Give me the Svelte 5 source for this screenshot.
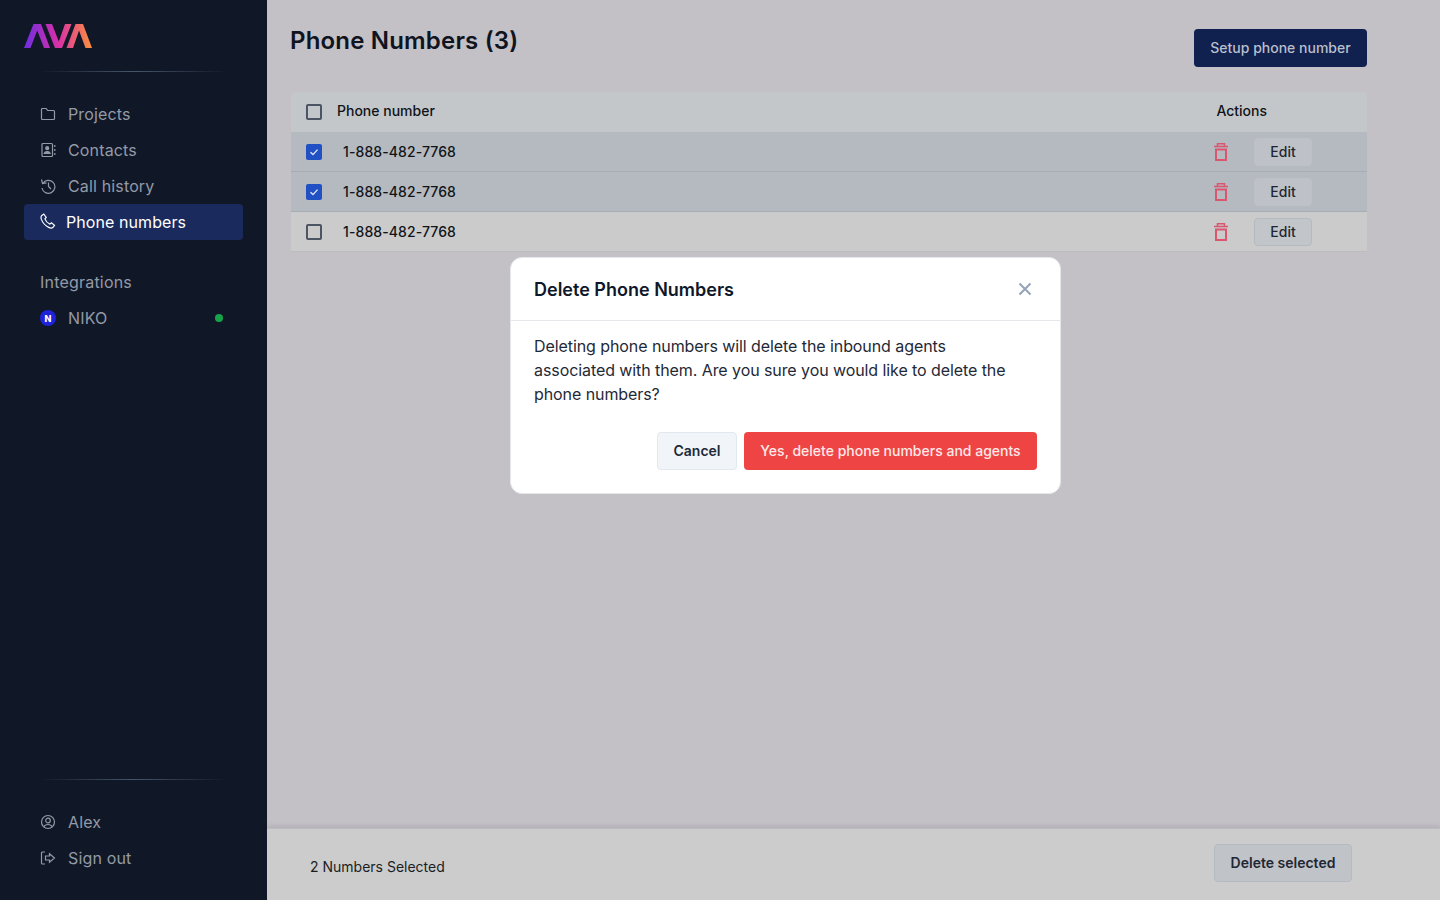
<script>
	const rows = [
		{ number: '1-888-482-7768', selected: true },
		{ number: '1-888-482-7768', selected: true },
		{ number: '1-888-482-7768', selected: false }
	];
</script>

<div class="app">
	<aside class="sidebar">
		<svg class="logo" width="68" height="24" viewBox="0 0 68 24" aria-label="AVA">
			<defs>
				<linearGradient id="ava" x1="0" x2="68" y1="0" y2="0" gradientUnits="userSpaceOnUse">
					<stop offset="0" stop-color="#6d2ee0" />
					<stop offset="0.5" stop-color="#d92fa8" />
					<stop offset="1" stop-color="#fb923c" />
				</linearGradient>
			</defs>
			<path fill="url(#ava)" d="M0 24 9.500 0H17l9 24h-6L13.200 6.500 6.500 24z" />
			<path fill="url(#ava)" d="M21.500 0H28l6.800 17.500L41 0h6.500L38 24h-7z" />
			<path fill="url(#ava)" d="M42.500 24 51.500 0H59l9 24h-6.500L55 6.500 49 24z" />
		</svg>
		<div class="sep top"></div>

		<nav class="nav">
			<a class="item">
				<svg viewBox="0 0 16 16"><path d="M1.500 3.500a1 1 0 0 1 1-1h3.700l1.500 2h5.800a1 1 0 0 1 1 1v7a1 1 0 0 1-1 1h-11a1 1 0 0 1-1-1z" /></svg>
				Projects
			</a>
			<a class="item">
				<svg viewBox="0 0 16 16"><rect x="2" y="1.500" width="10.500" height="13" rx="1" /><circle cx="7.200" cy="6.200" r="1.500" fill="currentColor" /><path d="M4.200 11.500c.4-1.500 1.600-2 3-2s2.600.5 3 2z" fill="currentColor" /><path d="M14.800 3v2M14.800 7v2M14.800 11v2" /></svg>
				Contacts
			</a>
			<a class="item">
				<svg class="history" viewBox="0 0 16 16"><path d="M2.800 5.500A6.500 6.500 0 1 1 2 10M1.500 1.500l1 4 4-.6M8.500 4.500v4l2.500 2.500" /></svg>
				Call history
			</a>
			<a class="item active">
				<svg class="phone" viewBox="0 0 16 16"><path d="M1.500 2.800 3.800 1l2.400 3.500-1.300 1.400c.8 2.200 2.700 4.200 5 5.200l1.500-1.300 3.100 2.500-1.700 2.200c-1 .9-2.500.7-4.100-.1-3.500-1.700-6-4.600-7.300-8-.5-1.400-.6-2.700.1-3.600z" /></svg>
				Phone numbers
			</a>
		</nav>

		<div class="group">
			<div class="group-title">Integrations</div>
			<a class="item">
				<span class="niko">N</span>
				NIKO
				<span class="status"></span>
			</a>
		</div>

		<div class="sep bottom"></div>
		<div class="nav foot">
			<a class="item">
				<svg viewBox="0 0 16 16"><circle cx="8" cy="8" r="6.500" /><circle cx="8" cy="6.500" r="2.300" /><path d="M3.800 12.800c.7-1.600 2.300-2.300 4.200-2.300s3.500.7 4.200 2.300" /></svg>
				Alex
			</a>
			<a class="item">
				<svg viewBox="0 0 16 16"><path d="M5 2H2.500a1 1 0 0 0-1 1v10a1 1 0 0 0 1 1H5M9.500 3.800 14.500 8l-5 4.200V10H5.500V6h4z" /></svg>
				Sign out
			</a>
		</div>
	</aside>

	<main class="main">
		<div class="content">
			<header class="head">
				<h1>Phone Numbers (3)</h1>
				<button class="setup">Setup phone number</button>
			</header>

			<div class="table">
				<div class="row th">
					<span class="check"></span>
					<span class="cell-number">Phone number</span>
					<span class="cell-actions">Actions</span>
				</div>
				{#each rows as row}
					<div class="row td" class:selected={row.selected}>
						<span class="check" class:on={row.selected}>
							{#if row.selected}
								<svg viewBox="0 0 16 16"><path d="M4.500 8.300 7 10.600l4.500-5" /></svg>
							{/if}
						</span>
						<span class="cell-number">{row.number}</span>
						<svg class="trash" viewBox="0 0 14 18">
							<path class="lid" d="M0 3.500h14M3.500 3.500V.7h7v2.800" />
							<path d="M2 6.500h10V17H2z" />
						</svg>
						<button class="edit">Edit</button>
					</div>
				{/each}
			</div>
		</div>

		<footer class="bar">
			<span>2 Numbers Selected</span>
			<button class="delete-selected">Delete selected</button>
		</footer>

		<div class="modal" role="dialog">
			<div class="modal-head">
				<h2>Delete Phone Numbers</h2>
				<svg class="close" viewBox="0 0 14 14"><path d="M1.500 1.500l11 11M12.500 1.500l-11 11" /></svg>
			</div>
			<p>
				Deleting phone numbers will delete the inbound agents associated with them. Are you sure you
				would like to delete the phone numbers?
			</p>
			<div class="modal-actions">
				<button class="cancel">Cancel</button>
				<button class="confirm">Yes, delete phone numbers and agents</button>
			</div>
		</div>
	</main>
</div>

<style>
	:global(body) {
		margin: 0;
		font-family: Inter, 'Liberation Sans', sans-serif;
	}

	button {
		font-family: inherit;
		cursor: pointer;
	}

	.app {
		display: flex;
		height: 100vh;
		overflow: hidden;
	}

	.sidebar {
		width: 267px;
		flex: none;
		box-sizing: border-box;
		display: flex;
		flex-direction: column;
		padding: 24px 24px 24px;
		background: #101828;
	}

	.logo {
		display: block;
	}

	.sep {
		height: 1px;
		width: 188px;
		margin-left: 16px;
		background: linear-gradient(90deg, rgba(71, 85, 105, 0), #475569 50%, rgba(71, 85, 105, 0));
	}

	.sep.top {
		margin-top: 23px;
	}

	.sep.bottom {
		margin-top: auto;
	}

	.nav {
		display: flex;
		flex-direction: column;
		margin-top: 24px;
		width: 219px;
	}

	.foot {
		margin-top: 24px;
	}

	.item {
		display: flex;
		align-items: center;
		gap: 12px;
		height: 36px;
		padding-left: 16px;
		font-size: 16px;
		letter-spacing: 0.15px;
		color: #949aa6;
		border-radius: 4px;
	}

	.item svg {
		width: 16px;
		height: 16px;
		fill: none;
		stroke: currentColor;
		stroke-width: 1.2;
		flex: none;
	}

	.item svg.phone {
		margin-top: -3px;
	}

	.item svg.history {
		margin-top: -1px;
	}

	.item.active {
		gap: 10px;
		letter-spacing: 0.08px;
		background: #1a2a5c;
		color: #fff;
	}

	.group {
		margin-top: 24px;
		width: 219px;
	}

	.group-title {
		height: 36px;
		line-height: 36px;
		padding-left: 16px;
		font-size: 16px;
		letter-spacing: 0.2px;
		color: #949aa6;
	}

	.niko {
		width: 16px;
		height: 16px;
		border-radius: 50%;
		background: #1f22d8;
		color: #fff;
		font-size: 9px;
		font-weight: 800;
		display: flex;
		align-items: center;
		justify-content: center;
	}

	.status {
		width: 8px;
		height: 8px;
		border-radius: 50%;
		background: #16a34a;
		margin-left: auto;
		margin-right: 20px;
	}

	.main {
		flex: 1;
		position: relative;
		display: flex;
		flex-direction: column;
		background: #c3c1c6;
	}

	.content {
		flex: 1;
		padding: 0 73px 0 23px;
	}

	.head {
		display: flex;
		justify-content: space-between;
		align-items: flex-start;
		height: 92px;
	}

	h1 {
		margin: 25px 0 0;
		font-size: 24px;
		line-height: 32px;
		font-weight: 600;
		letter-spacing: 0.18px;
		color: #0f1420;
	}

	.setup {
		margin-top: 29px;
		height: 38px;
		width: 173px;
		padding: 0 0 2px;
		border: 0;
		border-radius: 4px;
		background: #10204f;
		color: #b9bfcc;
		font-size: 14px;
		font-weight: 500;
	}

	.table {
		margin-left: 1px;
		font-size: 14px;
		color: #101318;
	}

	.row {
		display: flex;
		align-items: center;
		height: 40px;
		box-sizing: border-box;
		padding-left: 15px;
		border-radius: 4px 4px 0 0;
	}

	.th {
		background: #c3c7ca;
		font-weight: 500;
	}

	.th .cell-number {
		margin: 0 0 3px 15px;
	}

	.cell-actions {
		margin: 0 100px 3px auto;
	}

	.td {
		background: #cbcbcc;
		border-bottom: 1px solid #bcbdc1;
		border-radius: 0;
		font-weight: 500;
	}

	.td.selected {
		background: #b5bac0;
		border-bottom-color: #a7adb6;
	}

	.td .cell-number {
		margin-left: 21px;
		letter-spacing: 0.1px;
	}

	.check {
		width: 16px;
		height: 16px;
		box-sizing: border-box;
		border: 2px solid #4b5563;
		border-radius: 2px;
		flex: none;
	}

	.check.on {
		background: #2150c4;
		border-color: #2150c4;
	}

	.check svg {
		display: block;
		width: 16px;
		height: 16px;
		margin: -2px;
		fill: none;
		stroke: #dfe6f5;
		stroke-width: 1.400;
	}

	.trash {
		width: 14px;
		height: 18px;
		margin-left: auto;
		fill: none;
		stroke: #d9566f;
		stroke-width: 2;
	}

	.trash .lid {
		stroke-width: 1.500;
	}

	.edit {
		width: 58px;
		height: 28px;
		margin-left: 26px;
		margin-right: 55px;
		padding: 0;
		border: 1px solid #b5b9c0;
		border-radius: 4px;
		background: #c2c5ca;
		color: #1f2733;
		font-size: 14px;
		font-weight: 500;
	}

	.selected .edit {
		border-color: #bcc1c8;
		background: #bec2c8;
	}

	.bar {
		height: 72px;
		box-sizing: border-box;
		display: flex;
		justify-content: space-between;
		align-items: center;
		padding: 0 88px 0 43px;
		background: #cccccd;
		box-shadow: 0 -2px 4px rgba(60, 60, 70, 0.12);
		border-top: 1px solid #bdbdc0;
		font-size: 14px;
		color: #1a1d24;
	}

	.bar span {
		margin-top: 4px;
	}

	.delete-selected {
		width: 138px;
		height: 38px;
		margin-top: -4px;
		padding: 0;
		border: 1px solid #b5bac2;
		border-radius: 4px;
		background: #c0c3c8;
		color: #1f2733;
		font-size: 14px;
		font-weight: 600;
	}

	.modal {
		position: absolute;
		left: 243px;
		top: 257px;
		width: 551px;
		height: 237px;
		box-sizing: border-box;
		background: #fff;
		border: 1px solid #e5e7eb;
		border-radius: 12px;
	}

	.modal-head {
		display: flex;
		justify-content: space-between;
		align-items: center;
		height: 63px;
		box-sizing: border-box;
		padding: 0 28px 0 23px;
		border-bottom: 1px solid #e5e7eb;
	}

	h2 {
		margin: 0;
		font-size: 18px;
		font-weight: 600;
		color: #0f172a;
	}

	.close {
		width: 14px;
		height: 14px;
		fill: none;
		stroke: #94a3b8;
		stroke-width: 2;
	}

	p {
		margin: 13px 0 0;
		padding: 0 40px 0 23px;
		font-size: 16px;
		line-height: 24px;
		letter-spacing: -0.08px;
		color: #1f2937;
	}

	.modal-actions {
		display: flex;
		justify-content: flex-end;
		gap: 7px;
		margin-top: 26px;
		padding-right: 23px;
	}

	.modal-actions button {
		height: 38px;
		padding: 0 0 2px;
		border-radius: 4px;
		font-size: 14px;
		font-weight: 500;
	}

	.cancel {
		width: 80px;
		border: 1px solid #e2e8f0;
		background: #f1f5f9;
		color: #1f2937;
		font-weight: 600 !important;
	}

	.confirm {
		width: 293px;
		border: 0;
		background: #ef4444;
		color: #fde8e8;
	}
</style>
